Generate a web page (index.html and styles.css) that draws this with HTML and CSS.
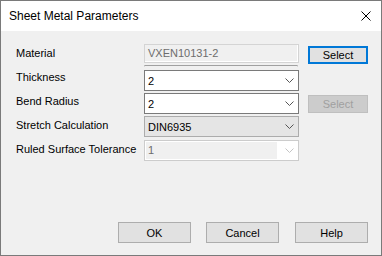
FILE: index.html
```html
<!DOCTYPE html>
<html lang="en">
<head>
    <meta charset="UTF-8">
    <title>Sheet Metal Parameters</title>
    <link rel="stylesheet" href="styles.css">
</head>
<body>
    <div class="window">
        <div class="titlebar">
            <span class="title">Sheet Metal Parameters</span>
            <svg class="close" width="10" height="10" viewBox="0 0 10 10">
                <path d="M0.5 0.5 L9.5 9.5 M9.5 0.5 L0.5 9.5" stroke="#000" stroke-width="1" fill="none"/>
            </svg>
        </div>

        <div class="content">
            <div class="form">
                <div class="labels">
                    <div class="label">Material</div>
                    <div class="label">Thickness</div>
                    <div class="label">Bend Radius</div>
                    <div class="label">Stretch Calculation</div>
                    <div class="label">Ruled Surface Tolerance</div>
                </div>

                <div class="fields">
                    <div class="textbox">VXEN10131-2</div>
                    <div class="ghost"></div>
                    <div class="combo">
                        <span>2</span>
                        <svg class="chevron" width="9" height="5" viewBox="0 0 9 5"><path d="M0.5 0.5 L4.5 4.5 L8.5 0.5" stroke="#555" fill="none"/></svg>
                    </div>
                    <div class="combo">
                        <span>2</span>
                        <svg class="chevron" width="9" height="5" viewBox="0 0 9 5"><path d="M0.5 0.5 L4.5 4.5 L8.5 0.5" stroke="#555" fill="none"/></svg>
                    </div>
                    <div class="combo list">
                        <span>DIN6935</span>
                        <svg class="chevron" width="9" height="5" viewBox="0 0 9 5"><path d="M0.5 0.5 L4.5 4.5 L8.5 0.5" stroke="#555" fill="none"/></svg>
                    </div>
                    <div class="combo ruled">
                        <span class="combo-text">1</span>
                        <svg class="chevron" width="9" height="5" viewBox="0 0 9 5"><path d="M0.5 0.5 L4.5 4.5 L8.5 0.5" stroke="#c4c4c4" fill="none"/></svg>
                    </div>
                </div>

                <div class="side">
                    <button class="btn small focused">Select</button>
                    <button class="btn small disabled">Select</button>
                </div>
            </div>

            <div class="footer">
                <button class="btn">OK</button>
                <button class="btn">Cancel</button>
                <button class="btn help">Help</button>
            </div>
        </div>
    </div>
</body>
</html>
```

FILE: styles.css
```css
body {
    margin: 0;
    font-family: "Liberation Sans", Arial, sans-serif;
}
.window {
    width: 382px;
    height: 256px;
    box-sizing: border-box;
    border: 1px solid #7a7a7a;
    background-color: #f0f0f0;
    display: flex;
    flex-direction: column;
}
.titlebar {
    height: 30px;
    background-color: #fff;
    display: flex;
    align-items: center;
    justify-content: space-between;
    padding: 0 10px 0 8px;
}
.title {
    font-size: 12px;
    color: #000;
}
.content {
    flex: 1;
    display: flex;
    flex-direction: column;
    padding: 0 13px 12px 15px;
    font-size: 11px;
}
.form {
    display: flex;
}
.labels {
    width: 128px;
    padding-top: 10px;
}
.label {
    height: 24px;
    line-height: 24px;
    color: #000;
}
.fields {
    width: 155px;
    padding-top: 13px;
    display: flex;
    flex-direction: column;
}
.textbox {
    height: 19px;
    box-sizing: border-box;
    border: 1px solid #d4d4d4;
    background-color: #f0f0f0;
    box-shadow: inset -1px -1px 0 #fff;
    line-height: 17px;
    padding-left: 3px;
    color: #6d6d6d;
}
.ghost {
    height: 2px;
    margin: 2px 1px 3px 0;
    box-sizing: border-box;
    border-top: 1px solid #a0a0a0;
    border-left: 1px solid #d8d8d8;
    border-right: 1px solid #d8d8d8;
}
.combo {
    height: 21px;
    box-sizing: border-box;
    border: 1px solid #7a7a7a;
    background-color: #fff;
    display: flex;
    align-items: center;
    justify-content: space-between;
    padding: 0 4px 0 3px;
    color: #000;
}
.combo + .combo {
    margin-top: 2px;
}
.combo.list {
    background-color: #e5e5e5;
    border-color: #acacac;
}
.combo.ruled {
    margin-top: 3px;
    border-color: #cccccc;
    padding: 1px 4px 1px 1px;
    align-items: stretch;
}
.combo.ruled .combo-text {
    flex: 0 0 131px;
    background-color: #f0f0f0;
    color: #6d6d6d;
    padding-left: 2px;
    line-height: 17px;
    box-sizing: border-box;
}
.combo.ruled .chevron {
    align-self: center;
}
.side {
    width: 60px;
    margin-left: 9px;
    padding-top: 15px;
    display: flex;
    flex-direction: column;
}
.btn {
    font-family: inherit;
    font-size: 11px;
    color: #000;
    background-color: #e1e1e1;
    border: 1px solid #adadad;
    box-sizing: border-box;
    padding: 0;
}
.btn.small {
    width: 60px;
    height: 18px;
}
.btn.focused {
    border: 2px solid #0078d7;
}
.btn.disabled {
    margin-top: 31px;
    background-color: #cccccc;
    border-color: #bfbfbf;
    color: #a0a0a0;
}
.footer {
    margin-top: auto;
    display: flex;
    justify-content: flex-end;
    gap: 15px;
}
.footer .btn {
    width: 73px;
    height: 21px;
}
.footer .help {
    margin-left: 1px;
}
```
